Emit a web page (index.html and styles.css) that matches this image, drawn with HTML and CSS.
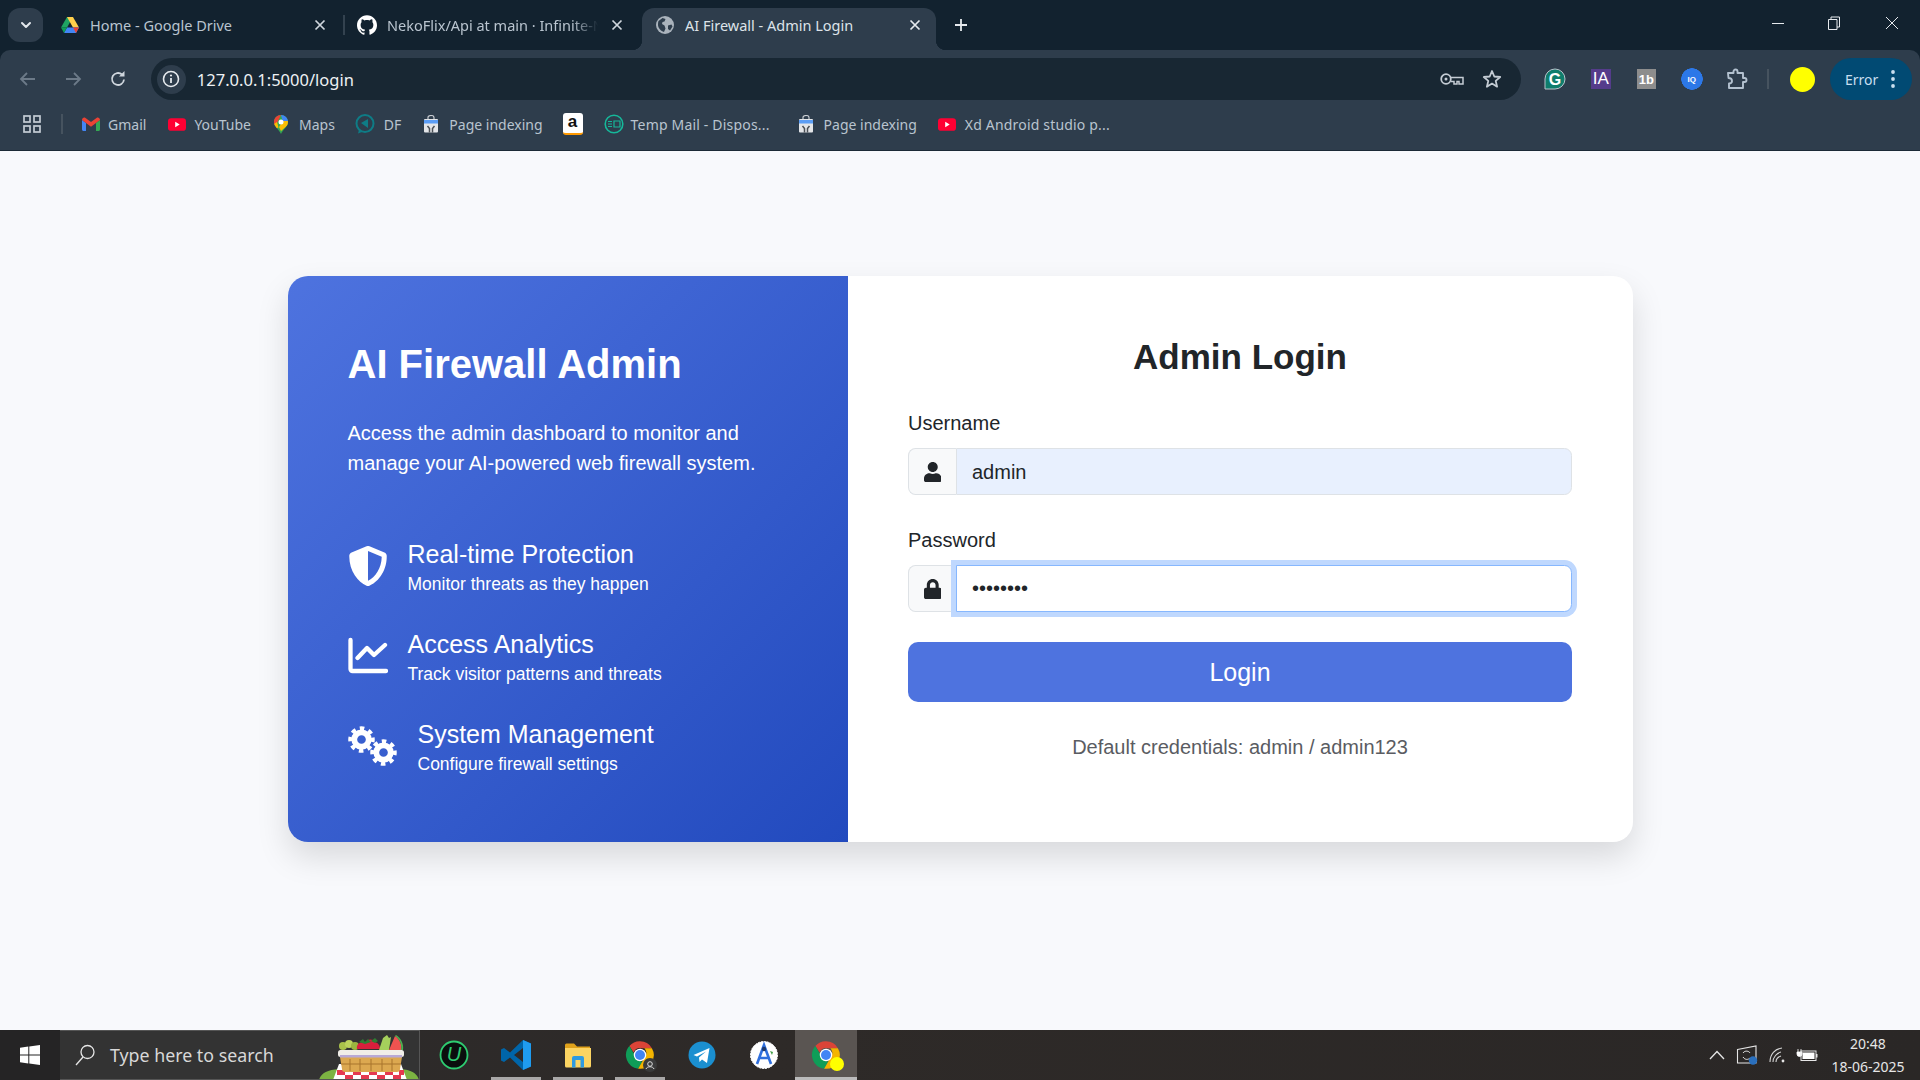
FILE: index.html
```html
<!DOCTYPE html>
<html lang="en">
<head>
<meta charset="utf-8">
<title>AI Firewall - Admin Login</title>
<link rel="stylesheet" href="styles.css">
</head>
<body>
<svg class="defs" width="0" height="0" aria-hidden="true">
  <defs>
    <symbol id="chrome" viewBox="0 0 48 48">
      <path fill="#db4437" d="M24 2a22 22 0 0 1 19 11H24a11 11 0 0 0-10.2 6.8L7 9.5A22 22 0 0 1 24 2z"/>
      <path fill="#0f9d58" d="M7 9.5l11 18.9A11 11 0 0 0 28 34.3L21 45.8A22 22 0 0 1 7 9.5z"/>
      <path fill="#f4b400" d="M43 13a22 22 0 0 1-22 32.8l11-19a11 11 0 0 0-1-13.8z"/>
      <circle cx="24" cy="24" r="10" fill="#fff"/>
      <circle cx="24" cy="24" r="8" fill="#4285f4"/>
    </symbol>
    <symbol id="yt" viewBox="0 0 20 14">
      <rect width="20" height="14" rx="3.5" fill="#ff0033"/>
      <path fill="#fff" d="M8 4l5 3-5 3z"/>
    </symbol>
    <symbol id="store" viewBox="0 0 16 18">
      <path d="M5 4V2.500a3 2 0 0 1 6 0V4" fill="none" stroke="#c9cdd2" stroke-width="1.200"/>
      <rect x="1" y="4" width="14" height="13.500" rx="1" fill="#e3e5e8"/>
      <rect x="1" y="5" width="14" height="3.500" fill="#5b9df5"/>
      <path d="M6.500 17.500v-4L4.500 11M9.500 17.500v-4l2-2.500" fill="none" stroke="#4a4f55" stroke-width="1.500"/>
    </symbol>
    <symbol id="gear" viewBox="0 0 28 28">
      <circle cx="14" cy="14" r="7.500" fill="none" stroke="#fff" stroke-width="6"/>
      <circle cx="14" cy="14" r="11.500" fill="none" stroke="#fff" stroke-width="4.500" stroke-dasharray="4.500 4.530" transform="rotate(-10 14 14)"/>
    </symbol>
    <clipPath id="pin">
      <path d="M7 0C3.100 0 0 3.100 0 6.900 0 11.500 4.800 14 7 19c2.200-5 7-7.500 7-12.100C14 3.100 10.900 0 7 0z"/>
    </clipPath>
  </defs>
</svg>

<header class="browser">
  <div class="tabstrip">
    <button class="tab-list" type="button" aria-label="Tab list">
      <svg width="12" height="8" viewBox="0 0 12 8"><path d="M2 2l4 4 4-4" fill="none" stroke="#e3e8ed" stroke-width="2" stroke-linecap="round" stroke-linejoin="round"/></svg>
    </button>
    <div class="tab">
      <svg class="fav" viewBox="0 0 18 16"><path fill="#1fa463" d="M6 0h6L6 10.500H0z"/><path fill="#ffd04b" d="M6 0h6l6 10.500h-6z"/><path fill="#4285f4" d="M3 16l3-5.500h12L15 16z"/><path fill="#0f9d58" d="M0 10.500h6L3 16z"/><path fill="#ea4335" d="M12 10.500h6L15 16z"/></svg>
      <span class="tab-title">Home - Google Drive</span>
      <svg class="tab-x" viewBox="0 0 12 12"><path d="M1.500 1.500l9 9M10.500 1.500l-9 9" stroke="#cfd6dd" stroke-width="1.700" fill="none"/></svg>
      <span class="tab-sep"></span>
    </div>
    <div class="tab">
      <svg class="fav fav-gh" viewBox="0 0 24 24"><path fill="#fff" d="M12 .297c-6.630 0-12 5.373-12 12 0 5.303 3.438 9.800 8.205 11.385.600.113.820-.258.820-.577 0-.285-.010-1.040-.015-2.040-3.338.724-4.042-1.610-4.042-1.610C4.422 18.070 3.633 17.700 3.633 17.700c-1.087-.744.084-.729.084-.729 1.205.084 1.838 1.236 1.838 1.236 1.070 1.835 2.809 1.305 3.495.998.108-.776.417-1.305.760-1.605-2.665-.300-5.466-1.332-5.466-5.930 0-1.310.465-2.380 1.235-3.220-.135-.303-.540-1.523.105-3.176 0 0 1.005-.322 3.300 1.230.960-.267 1.980-.399 3-.405 1.020.006 2.040.138 3 .405 2.280-1.552 3.285-1.230 3.285-1.230.645 1.653.240 2.873.120 3.176.765.840 1.230 1.910 1.230 3.220 0 4.610-2.805 5.625-5.475 5.920.420.360.810 1.096.810 2.220 0 1.606-.015 2.896-.015 3.286 0 .315.210.690.825.570C20.565 22.092 24 17.592 24 12.297c0-6.627-5.373-12-12-12"/></svg>
      <span class="tab-title tab-fade">NekoFlix/Api at main · Infinite-N</span>
      <svg class="tab-x" viewBox="0 0 12 12"><path d="M1.500 1.500l9 9M10.500 1.500l-9 9" stroke="#cfd6dd" stroke-width="1.700" fill="none"/></svg>
    </div>
    <div class="tab tab-active">
      <svg class="fav" viewBox="0 0 18 18"><circle cx="9" cy="9" r="9" fill="#aab3bc"/><path fill="#2e3d4c" d="M2.500 5l4-3 3 1-1 2.500-2 .5-.5 2 2.500 1.500 1 3-1.500 3.500C5 15 2 12 2 9c0-1.500.1-3 .5-4zM12 9.500l3.500-1 1 2-2.500 4-2-1.500z"/></svg>
      <span class="tab-title">AI Firewall - Admin Login</span>
      <svg class="tab-x" viewBox="0 0 12 12"><path d="M1.500 1.500l9 9M10.500 1.500l-9 9" stroke="#e6eaee" stroke-width="1.700" fill="none"/></svg>
    </div>
    <svg class="new-tab" width="14" height="14" viewBox="0 0 14 14"><path d="M7 1v12M1 7h12" stroke="#e6eaee" stroke-width="1.800"/></svg>
    <div class="win-controls">
      <span class="win-btn"><svg width="12" height="12" viewBox="0 0 12 12"><path d="M0 6.500h12" stroke="#e6eaee"/></svg></span>
      <span class="win-btn win-restore"><svg width="14" height="14" viewBox="0 0 14 14"><path d="M1.500 3.500h8.500v10h-8.500zM4 3.500V1h8.500v10H10" fill="none" stroke="#e6eaee"/></svg></span>
      <span class="win-btn"><svg width="14" height="14" viewBox="0 0 14 14"><path d="M1 1l12 12M13 1L1 13" stroke="#e6eaee" fill="none"/></svg></span>
    </div>
  </div>

  <div class="toolbar">
    <span class="nav-btn"><svg width="18" height="16" viewBox="0 0 18 16"><path d="M16 8H2M8 2L2 8l6 6" fill="none" stroke="#6c7a88" stroke-width="1.800"/></svg></span>
    <span class="nav-btn"><svg width="18" height="16" viewBox="0 0 18 16"><path d="M2 8h14M10 2l6 6-6 6" fill="none" stroke="#6c7a88" stroke-width="1.800"/></svg></span>
    <span class="nav-btn"><svg width="18" height="18" viewBox="0 0 18 18"><path d="M15 9.500A6 6 0 1 1 13 4.500" fill="none" stroke="#cfd6dd" stroke-width="1.800"/><path d="M15.500 1v5.500H10z" fill="#cfd6dd"/></svg></span>
    <div class="omnibox">
      <span class="site-info"><svg width="18" height="18" viewBox="0 0 18 18"><circle cx="9" cy="9" r="7.500" fill="none" stroke="#e6eaee" stroke-width="1.600"/><path d="M9 8v5" stroke="#e6eaee" stroke-width="1.800"/><circle cx="9" cy="5.500" r="1.100" fill="#e6eaee"/></svg></span>
      <span class="url">127.0.0.1:5000/login</span>
      <svg class="omni-icon key" width="24" height="14" viewBox="0 0 24 14"><circle cx="6" cy="7" r="4.800" fill="none" stroke="#c4ccd4" stroke-width="1.800"/><circle cx="6" cy="7" r="1.500" fill="#c4ccd4"/><path d="M11 5.500h12v6.500h-4V9.500h-2V12h-3V9.500h-3" fill="none" stroke="#c4ccd4" stroke-width="1.500"/></svg>
      <svg class="omni-icon star" width="20" height="20" viewBox="0 0 20 20"><path d="M10 2l2.300 5.500 5.900.5-4.500 3.900 1.400 5.800L10 14.600l-5.100 3.100 1.400-5.800L1.800 8l5.900-.5z" fill="none" stroke="#c4ccd4" stroke-width="1.800" stroke-linejoin="round"/></svg>
    </div>
    <div class="extensions">
      <span class="ext"><svg width="22" height="22" viewBox="0 0 22 22"><path d="M11 1a10 10 0 1 1 0 20H1v-10A10 10 0 0 1 11 1z" fill="#0f7d6c" stroke="#b9c4cc" stroke-width="1"/><text class="ext-g" x="11" y="16.500" text-anchor="middle">G</text></svg></span>
      <span class="ext ext-ia">IA</span>
      <span class="ext ext-tb">1b</span>
      <span class="ext ext-iq">IQ</span>
      <span class="ext"><svg width="22" height="22" viewBox="0 0 22 22"><path d="M2 5h5.500V3.500a2 2 0 0 1 4 0V5H17v5h1.500a2 2 0 0 1 0 4H17v6H3v-4.500c2 0 3-1.200 3-2.500s-1-3-3.500-3z" fill="none" stroke="#b4c2d0" stroke-width="1.900" stroke-linejoin="round"/></svg></span>
      <span class="ext-sep"></span>
      <span class="avatar"></span>
      <span class="error-chip">Error
        <svg width="4" height="18" viewBox="0 0 4 18"><circle cx="2" cy="2" r="1.900" fill="#c9dff0"/><circle cx="2" cy="9" r="1.900" fill="#c9dff0"/><circle cx="2" cy="16" r="1.900" fill="#c9dff0"/></svg>
      </span>
    </div>
  </div>

  <nav class="bookmarks">
    <svg class="bm-apps" width="18" height="18" viewBox="0 0 18 18"><g fill="none" stroke="#c4ccd4" stroke-width="1.700"><rect x="1" y="1" width="6" height="6"/><rect x="11" y="1" width="6" height="6"/><rect x="1" y="11" width="6" height="6"/><rect x="11" y="11" width="6" height="6"/></g></svg>
    <span class="bm-sep"></span>
    <a class="bm bm-gmail"><svg width="18" height="14" viewBox="0 0 18 14"><path fill="#4285f4" d="M0 3v9.500c0 .800.700 1.500 1.500 1.500H4V6z"/><path fill="#34a853" d="M14 6v8h2.500c.800 0 1.500-.700 1.500-1.500V3z"/><path fill="#ea4335" d="M0 3c0-2 2-3 3.500-2L9 5l5.500-4C16 0 18 1 18 3l-4 3-5 3.800L4 6z"/></svg>Gmail</a>
    <a class="bm bm-yt"><svg width="18" height="13"><use href="#yt"/></svg>YouTube</a>
    <a class="bm bm-maps"><svg width="14" height="19" viewBox="0 0 14 19"><g clip-path="url(#pin)"><rect width="14" height="19" fill="#34a853"/><path d="M0 0h7L3 8 0 10z" fill="#ea4335"/><path d="M7 0h7v7H9z" fill="#4285f4"/><path d="M0 9l3-2 1.500 5.500L3 13H0z" fill="#fbbc04"/><path d="M14 6v4l-7 6-2-4 4-6z" fill="#fbbc04"/></g><circle cx="7" cy="7" r="2.500" fill="#fff"/></svg>Maps</a>
    <a class="bm bm-df"><svg width="20" height="20" viewBox="0 0 20 20"><circle cx="10" cy="9.500" r="8.500" fill="none" stroke="#0e7c86" stroke-width="2"/><path d="M4 16l-1 3.500 4-1.500z" fill="#0e7c86"/><path d="M6 9l7-4v9z" fill="#0e7c86"/></svg>DF</a>
    <a class="bm bm-page"><svg width="16" height="18"><use href="#store"/></svg>Page indexing</a>
    <a class="bm bm-amz"><span class="amz">a</span></a>
    <a class="bm bm-temp"><svg width="20" height="20" viewBox="0 0 20 20"><circle cx="10" cy="10" r="8.800" fill="none" stroke="#16b89a" stroke-width="1.600"/><path d="M4 7.500h4M4 10h4M4 12.500h4M10 7h6v6h-6z" fill="none" stroke="#16b89a" stroke-width="1.200"/></svg>Temp Mail - Dispos...</a>
    <a class="bm bm-page2"><svg width="16" height="18"><use href="#store"/></svg>Page indexing</a>
    <a class="bm bm-xd"><svg width="18" height="13"><use href="#yt"/></svg>Xd Android studio p...</a>
  </nav>
</header>

<main class="page">
  <section class="card">
    <div class="panel">
      <h1 class="panel-title">AI Firewall Admin</h1>
      <p class="panel-desc">Access the admin dashboard to monitor and manage your AI-powered web firewall system.</p>
      <ul class="features">
        <li class="feature">
          <svg class="feat-icon" width="40" height="40" viewBox="0 0 512 512"><path fill="#fff" d="M466.500 83.700l-192-80a48.150 48.150 0 0 0-36.900 0l-192 80C27.700 91.100 16 108.600 16 128c0 198.500 114.500 335.700 221.500 380.300 11.800 4.900 25.100 4.900 36.900 0C360.100 472.600 496 349.300 496 128c0-19.400-11.700-36.900-29.500-44.300zM256.100 446.300l-.1-381 175.900 73.300c-3.300 151.400-82.100 261.100-175.800 307.700z"/></svg>
          <div><h3 class="feat-title">Real-time Protection</h3><p class="feat-sub">Monitor threats as they happen</p></div>
        </li>
        <li class="feature">
          <svg class="feat-icon" width="40" height="40" viewBox="0 0 40 40"><path d="M2.500 4v29a2 2 0 0 0 2 2H38" fill="none" stroke="#fff" stroke-width="4.300" stroke-linecap="round"/><path d="M9.500 22l9.500-10 7 7 11-10" fill="none" stroke="#fff" stroke-width="4.300" stroke-linecap="round" stroke-linejoin="round"/></svg>
          <div><h3 class="feat-title">Access Analytics</h3><p class="feat-sub">Track visitor patterns and threats</p></div>
        </li>
        <li class="feature">
          <svg class="feat-icon" width="50" height="40" viewBox="0 0 50 40"><use href="#gear" x="0" y="0" width="27" height="27"/><use href="#gear" x="22" y="13" width="27" height="27"/></svg>
          <div><h3 class="feat-title">System Management</h3><p class="feat-sub">Configure firewall settings</p></div>
        </li>
      </ul>
    </div>
    <form class="login">
      <h2 class="login-title">Admin Login</h2>
      <label class="field-label" for="u">Username</label>
      <div class="input-group">
        <span class="addon"><svg width="17.500" height="20" viewBox="0 0 448 512"><path fill="#212529" d="M224 256c70.700 0 128-57.300 128-128S294.700 0 224 0 96 57.300 96 128s57.300 128 128 128zm89.600 32h-16.700c-22.200 10.200-46.900 16-72.900 16s-50.600-5.800-72.900-16h-16.700C60.200 288 0 348.200 0 422.400V464c0 26.500 21.500 48 48 48h352c26.500 0 48-21.500 48-48v-41.600c0-74.200-60.200-134.400-134.400-134.400z"/></svg></span>
        <input class="input input-filled" id="u" type="text" value="admin">
      </div>
      <label class="field-label" for="p">Password</label>
      <div class="input-group">
        <span class="addon"><svg width="17.500" height="20" viewBox="0 0 448 512"><path fill="#212529" d="M400 224h-24v-72C376 68.200 307.800 0 224 0S72 68.200 72 152v72H48c-26.500 0-48 21.500-48 48v192c0 26.500 21.500 48 48 48h352c26.500 0 48-21.500 48-48V272c0-26.500-21.500-48-48-48zm-104 0H152v-72c0-39.700 32.300-72 72-72s72 32.300 72 72v72z"/></svg></span>
        <input class="input input-focus" id="p" type="password" value="admin123">
      </div>
      <button class="login-btn" type="button">Login</button>
      <p class="creds">Default credentials: admin / admin123</p>
    </form>
  </section>
</main>

<footer class="taskbar">
  <span class="start"><svg width="20" height="20" viewBox="0 0 20 20"><path fill="#fff" d="M0 2.800l8.300-1.200v8H0zM9.300 1.400L20 0v9.600H9.300zM0 10.500h8.300v8L0 17.300zM9.300 10.500H20V20L9.300 18.600z"/></svg></span>
  <div class="search">
    <svg width="20" height="22" viewBox="0 0 20 22"><circle cx="12.500" cy="8" r="6.500" fill="none" stroke="#e6e6e6" stroke-width="1.300"/><path d="M8 13l-7 8" stroke="#e6e6e6" stroke-width="1.300"/></svg>
    <span class="search-text">Type here to search</span>
    <svg class="basket" width="100" height="47" viewBox="0 0 100 47">
      <path d="M0 47c2-7 8-10 20-11h62c10 1 16 4 18 11z" fill="#7cb342"/>
      <path d="M14 47l6-16h62l6 16z" fill="#fff"/>
      <path d="M18 37h8v5h-8zM34 37h8v5h-8zM50 37h8v5h-8zM66 37h8v5h-8zM80 37h5v5h-5zM26 42h8v5h-8zM42 42h8v5h-8zM58 42h8v5h-8zM74 42h8v5h-8z" fill="#e53950"/>
      <path d="M21 24h62l-2 12a3 3 0 0 1-3 3H26a3 3 0 0 1-3-3z" fill="#dca850"/>
      <path d="M31 26v12M41 26v12M52 26v12M63 26v12M73 26v12M22 31h60" stroke="#a8742c" stroke-width="1"/>
      <rect x="19" y="17" width="66" height="7" rx="2.500" fill="#f1eee8"/>
      <rect x="21" y="22" width="62" height="2.500" fill="#b9a9d6"/>
      <circle cx="24" cy="13" r="4" fill="#a9c24a"/><circle cx="30" cy="11" r="4" fill="#bcd25c"/><circle cx="36" cy="13" r="4" fill="#9bb53f"/>
      <path d="M38 16c-1-5 4-8 8-6 1-4 8-5 10-1 3 1 5 3 5 7z" fill="#d81f3c"/>
      <path d="M40 9l4-3 2 3 3-3 3 3-6 2zM52 8l4-3 3 3-3 2z" fill="#2e7d32"/>
      <path d="M60 17l4-12 4-3 2 3 2-1-2 13z" fill="#a5cf5c"/>
      <path d="M70 17l6-14c5 3 7 9 6 14z" fill="#ef5350"/>
      <path d="M76 3c5 3 7 9 6 14h2c1-6-2-12-7-15z" fill="#4caf50"/>
    </svg>
  </div>
  <div class="apps">
    <span class="app"><svg width="30" height="30" viewBox="0 0 30 30"><circle cx="15" cy="15" r="13.500" fill="#0b0f0e" stroke="#2ecc71" stroke-width="1.800"/><text class="app-u" x="15" y="21" text-anchor="middle">U</text></svg></span>
    <span class="app app-open"><svg width="32" height="32" viewBox="0 0 32 32"><path fill="#0065a9" d="M23 1L10 13.500 4 9 1 10.500v11L4 23l6-4.500L23 31l8-3.500V4.500zM23 9v14l-9-7z"/><path fill="#1f9cf0" d="M23 1l8 3.500v23L23 31z"/></svg></span>
    <span class="app app-open"><svg width="28" height="28" viewBox="0 0 28 28"><path fill="#e0a21b" d="M1 4a1.500 1.500 0 0 1 1.500-1.500H10l3 3h13V10H1z"/><path fill="#fcd462" d="M1 7h26v18a1.500 1.500 0 0 1-1.500 1.500h-23A1.500 1.500 0 0 1 1 25z"/><path fill="#2f9ae0" d="M8 26.500V17a2 2 0 0 1 2-2h8a2 2 0 0 1 2 2v9.500h-3.500V19h-5v7.500z"/></svg></span>
    <span class="app app-open app-badge"><svg width="30" height="30"><use href="#chrome"/></svg><svg class="badge" width="14" height="14" viewBox="0 0 14 14"><circle cx="7" cy="7" r="7" fill="#3a3a3a"/><circle cx="7" cy="6" r="2.300" fill="none" stroke="#ddd"/><path d="M3 11c1-3 7-3 8 0" fill="none" stroke="#ddd"/></svg></span>
    <span class="app"><svg width="28" height="28" viewBox="0 0 28 28"><circle cx="14" cy="14" r="13.500" fill="#1b8fd0"/><path d="M5.500 14l16-7-2.500 15-5-3.500-2.500 2.500-.5-4.500 7-6-9 5z" fill="#fff"/></svg></span>
    <span class="app"><svg width="30" height="30" viewBox="0 0 30 30"><circle cx="15" cy="15" r="13.500" fill="#fff" stroke="#fff" stroke-dasharray="2 1"/><path d="M8 24L15 5l7 19M10 18h10" fill="none" stroke="#2f6fdd" stroke-width="2.600"/><circle cx="15" cy="9" r="2.200" fill="#1d3a6e"/><path d="M21 11l3 1-1 3z" fill="#43a047"/></svg></span>
    <span class="app app-active"><svg width="30" height="30"><use href="#chrome"/></svg><span class="chrome-dot"></span></span>
  </div>
  <div class="tray">
    <span class="tray-item"><svg width="16" height="10" viewBox="0 0 16 10"><path d="M1 9l7-7.500L15 9" fill="none" stroke="#e6e6e6" stroke-width="1.300"/></svg></span>
    <span class="tray-item tray-net"><svg width="22" height="20" viewBox="0 0 22 20"><path d="M1.500 4.500L20 1v17H1.500z" fill="none" stroke="#e6e6e6" stroke-width="1.100"/><path d="M7 8c2-3 6-2 7 0M14 13c-2 2-5 2-7-1" fill="none" stroke="#e6e6e6" stroke-width="1"/><circle cx="17" cy="15.500" r="4.200" fill="#2a6fbd"/></svg></span>
    <span class="tray-item"><svg width="16" height="16" viewBox="0 0 16 16"><g fill="none" stroke="#d6d6d6" stroke-width="1.100"><path d="M1 15C1 7 6 2 13 1"/><path d="M4 15c0-5 4-9 8-10"/><path d="M7 15c0-3 2-5 5-6"/></g><circle cx="14" cy="14" r="1.400" fill="#e6e6e6"/></svg></span>
    <span class="tray-item"><svg width="22" height="14" viewBox="0 0 22 14"><path d="M2 1v3M5 1v3M1 4h5v2a2 2 0 0 1-5 0z" fill="#fff" stroke="#fff" stroke-width=".8"/><rect x="5" y="3" width="15" height="9.500" fill="none" stroke="#e6e6e6"/><rect x="6.500" y="4.500" width="12" height="6.500" fill="#fff"/><rect x="20" y="6" width="1.500" height="3.500" fill="#e6e6e6"/></svg></span>
    <div class="clock"><span>20:48</span><span>18-06-2025</span></div>
  </div>
</footer>
</body>
</html>
```

FILE: styles.css
```css
* { box-sizing: border-box; }
html, body { height: 100%; }
body {
  margin: 0;
  width: 1920px;
  height: 1080px;
  overflow: hidden;
  display: flex;
  flex-direction: column;
  background: #f8f9fc;
  font-family: "Liberation Sans", Arial, sans-serif;
  color: #212529;
}
.defs { position: absolute; }

/* Browser chrome */
.browser {
  flex: none;
  background: #12222f;
  font-family: "Noto Sans", "Open Sans", sans-serif;
}
.tabstrip {
  height: 50px;
  display: flex;
  align-items: flex-end;
  padding-left: 8px;
}
.tab-list {
  width: 35px;
  height: 34px;
  margin: 0 5px 8px 0;
  padding: 0;
  border: 0;
  border-radius: 12px;
  background: #2e3d4c;
  display: flex;
  align-items: center;
  justify-content: center;
}
.tab {
  position: relative;
  width: 297px;
  height: 42px;
  display: flex;
  align-items: center;
  padding: 0 19px 8px 13px;
  color: #b9c4cf;
  font-size: 14.500px;
}
.fav { width: 18px; height: 18px; flex: none; margin-right: 11px; }
.fav-gh { width: 20px; height: 20px; margin-right: 10px; margin-left: -1px; }
.tab-title {
  flex: 1;
  white-space: nowrap;
  overflow: hidden;
}
.tab-fade {
  margin-right: -8px;
  -webkit-mask-image: linear-gradient(90deg, #000 84%, transparent 96%);
  mask-image: linear-gradient(90deg, #000 84%, transparent 96%);
}
.tab-x { width: 12px; height: 12px; flex: none; margin-left: 12px; }
.tab-sep {
  position: absolute;
  right: 0;
  top: 7px;
  width: 2px;
  height: 20px;
  background: #33424f;
}
.tab-active {
  width: 294px;
  padding: 0 15px 8px 14px;
  background: #2e3d4c;
  border-radius: 12px 12px 0 0;
  color: #dde3e9;
}
.tab-active::before, .tab-active::after {
  content: "";
  position: absolute;
  bottom: 0;
  width: 10px;
  height: 10px;
}
.tab-active::before {
  left: -10px;
  background: radial-gradient(circle at 0 0, transparent 10px, #2e3d4c 10.500px);
}
.tab-active::after {
  right: -10px;
  background: radial-gradient(circle at 100% 0, transparent 10px, #2e3d4c 10.500px);
}
.new-tab { margin: 0 0 18px 18px; }
.win-controls { margin-left: auto; display: flex; align-self: flex-start; }
.win-btn {
  width: 57px;
  height: 46px;
  display: flex;
  align-items: center;
  justify-content: center;
}
.win-restore { padding-right: 2px; }

.toolbar {
  height: 50px;
  background: #2e3d4c;
  border-radius: 10px 10px 0 0;
  display: flex;
  align-items: flex-start;
  padding: 8px 8px 0 6px;
  position: relative;
}
.nav-btn {
  width: 45px;
  height: 42px;
  display: flex;
  align-items: center;
  justify-content: center;
}
.omnibox {
  width: 1371px;
  height: 42px;
  margin-left: 10px;
  background: #182733;
  border-radius: 21px;
  display: flex;
  align-items: center;
  padding: 0 19px 0 6px;
}
.site-info {
  width: 29px;
  height: 29px;
  border-radius: 50%;
  background: #2e3d4c;
  display: flex;
  align-items: center;
  justify-content: center;
  flex: none;
}
.url {
  margin-left: 11px;
  color: #eef1f4;
  font-size: 16.500px;
  flex: 1;
}
.omni-icon { flex: none; }
.star { margin-left: 18px; }
.extensions {
  display: flex;
  align-items: center;
  height: 42px;
  margin-left: 12px;
}
.ext {
  width: 45.500px;
  height: 42px;
  display: flex;
  align-items: center;
  justify-content: center;
  color: #fff;
  font-family: "Liberation Sans", sans-serif;
}
.ext-g { fill: #fff; font: bold 16px "Liberation Sans", sans-serif; }
.ext-ia, .ext-tb, .ext-iq { background-clip: content-box; padding: 11px 13px; }
.ext-ia { background-color: #553c8b; font-size: 17px; }
.ext-tb { background-color: #8d8d8d; font-size: 13px; font-weight: bold; }
.ext-iq {
  padding: 11px 12px;
  background: radial-gradient(circle, #2c78e8 10.500px, transparent 11px);
  font-size: 8px;
  font-weight: bold;
}
.ext-sep { width: 2px; height: 20px; background: #46535f; margin: 0 21px 0 7px; }
.avatar {
  width: 25px;
  height: 25px;
  border-radius: 50%;
  background: #ff0;
  margin-right: 15px;
}
.error-chip {
  width: 82px;
  height: 42px;
  border-radius: 21px;
  background: #014a73;
  color: #c9dff0;
  font-size: 14px;
  display: flex;
  align-items: center;
  padding-left: 15px;
  gap: 13px;
}

.bookmarks {
  height: 51px;
  background: #2e3d4c;
  border-bottom: 1px solid #1c2a36;
  display: flex;
  align-items: center;
  padding: 0 0 2px 23px;
}
.bm-sep { width: 2px; height: 20px; background: #46535f; margin: 0 0 0 20px; }
.bm {
  display: flex;
  align-items: center;
  gap: 8px;
  color: #b9c4cf;
  font-size: 14px;
  white-space: nowrap;
}
.bm-gmail { margin-left: 19px; }
.bm-yt { margin-left: 22px; }
.bm-maps { margin-left: 23px; gap: 11px; }
.bm-df { margin-left: 20px; gap: 9px; }
.bm-page { margin-left: 22px; gap: 10px; }
.bm-amz { margin-left: 20px; }
.bm-temp { margin-left: 21px; letter-spacing: .18px; gap: 7px; }
.bm-page2 { margin-left: 28px; gap: 10px; }
.bm-xd { margin-left: 21px; letter-spacing: .18px; gap: 9px; }
.amz {
  width: 20px;
  height: 22px;
  border-radius: 3px;
  background: #fff;
  color: #111;
  font: bold 17px/18px "Liberation Sans", sans-serif;
  text-align: center;
  display: block;
  border-bottom: 2px solid #f90;
}

/* Page */
.page {
  flex: 1;
  min-height: 0;
  padding: 125px 0 0 288px;
  display: flex;
  align-items: flex-start;
}
.card {
  width: 1345px;
  height: 566px;
  display: flex;
  background: #fff;
  border-radius: 20px;
  overflow: hidden;
  box-shadow: 0 15px 32px rgba(0, 0, 0, .13);
}
.panel {
  width: 560px;
  flex: none;
  padding: 64px 60px 0 59.500px;
  color: #fff;
  background: linear-gradient(135deg, #4e73df 0%, #224abe 100%);
}
.panel-title {
  margin: 0 0 30px;
  font-size: 40px;
  line-height: 48px;
  font-weight: 700;
}
.panel-desc {
  margin: 0 0 58px;
  font-size: 20px;
  line-height: 30px;
}
.features { list-style: none; margin: 0; padding: 0; }
.feature {
  display: flex;
  align-items: center;
  gap: 20px;
  height: 60px;
  margin-bottom: 30px;
}
.feat-icon { flex: none; }
.feat-title {
  margin: 0;
  font-size: 25px;
  line-height: 36px;
  font-weight: 400;
}
.feat-sub {
  margin: 0;
  font-size: 17.500px;
  line-height: 25px;
}

.login {
  flex: 1;
  padding: 60px 61px 0 60px;
}
.login-title {
  margin: 0 0 30px;
  text-align: center;
  font-size: 35px;
  line-height: 42px;
  font-weight: 700;
}
.field-label {
  display: block;
  font-size: 20px;
  line-height: 30px;
  margin-bottom: 10px;
}
.input-group {
  position: relative;
  display: flex;
  height: 47px;
  margin-bottom: 30px;
}
.addon {
  width: 48px;
  flex: none;
  display: flex;
  align-items: center;
  justify-content: center;
  background: #f8f9fa;
  border: 1px solid #dee2e6;
  border-right: 0;
  border-radius: 7.500px 0 0 7.500px;
}
.input {
  flex: 1;
  min-width: 0;
  padding: 1px 15px 0;
  border: 1px solid #dee2e6;
  border-radius: 0 7.500px 7.500px 0;
  font-family: "Liberation Sans", sans-serif;
  font-size: 20px;
  color: #212529;
  outline: 0;
}
.input-filled { background: #e8f0fe; }
.input-focus {
  position: relative;
  padding-top: 0;
  background: #fff;
  border-color: #86b7fe;
  box-shadow: 0 0 0 5px #bfd8fe;
}
.login-btn {
  display: block;
  width: 100%;
  height: 60px;
  border: 0;
  border-radius: 10px;
  background: #4e73df;
  color: #fff;
  font-family: "Liberation Sans", sans-serif;
  font-size: 25px;
}
.creds {
  margin: 30px 0 0;
  text-align: center;
  font-size: 20px;
  line-height: 30px;
  color: #5a5c62;
}

/* Taskbar */
.taskbar {
  flex: none;
  height: 50px;
  display: flex;
  background: linear-gradient(90deg, #2c2a2b, #2e2a28 40%, #2a2726);
  font-family: "Noto Sans", "Open Sans", sans-serif;
  color: #e6e6e6;
}
.start {
  width: 60px;
  display: flex;
  align-items: center;
  justify-content: center;
  background: #252425;
}
.search {
  width: 360px;
  display: flex;
  align-items: center;
  padding-left: 15px;
  background: #333;
  border: 1px solid #555;
  border-width: 1px 1px 1px 0;
  overflow: hidden;
}
.search-text { margin-left: 15px; font-size: 17.800px; color: #d8d8d8; white-space: nowrap; }
.basket { margin-left: auto; align-self: flex-end; flex: none; margin-bottom: -1px; }
.apps { display: flex; margin-left: 3px; }
.app {
  position: relative;
  width: 62px;
  height: 50px;
  display: flex;
  align-items: center;
  justify-content: center;
}
.app-u { fill: #2ecc71; font: italic 20px "Liberation Sans", sans-serif; }
.app-open::after, .app-active::after {
  content: "";
  position: absolute;
  left: 6px;
  right: 6px;
  bottom: 0;
  height: 3px;
  background: #a9a7a7;
}
.app-active { background: #5a5552; }
.app-active::after { left: 0; right: 0; background: #bbb; }
.badge { position: absolute; left: 34px; top: 28px; }
.chrome-dot {
  position: absolute;
  left: 35px;
  top: 27px;
  width: 14px;
  height: 14px;
  border-radius: 50%;
  background: #ff0;
}
.tray { margin-left: auto; display: flex; align-items: center; padding-right: 10px; }
.tray-item {
  width: 30px;
  height: 50px;
  display: flex;
  align-items: center;
  justify-content: center;
}
.clock {
  width: 84px;
  margin-left: 4px;
  display: flex;
  flex-direction: column;
  align-items: center;
  font-size: 14px;
  line-height: 23px;
}
```
